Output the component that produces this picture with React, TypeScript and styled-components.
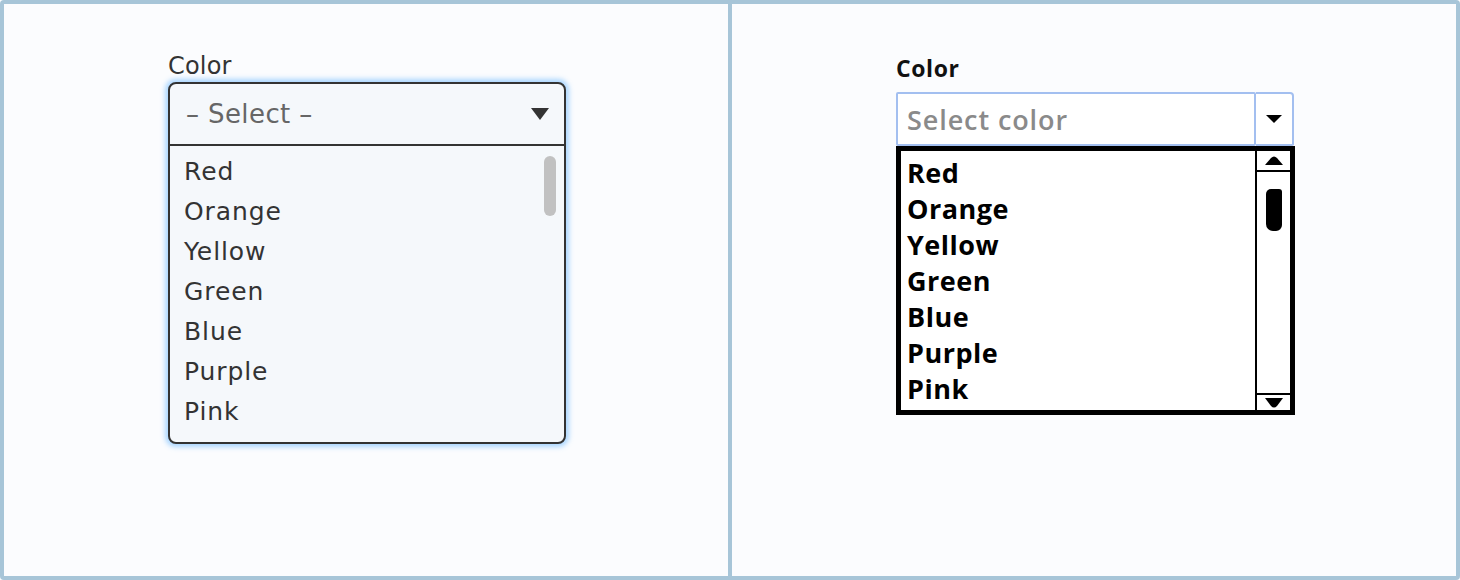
import React from "react";
import styled, { createGlobalStyle } from "styled-components";

const GlobalStyle = createGlobalStyle`
    html, body {
        margin: 0;
        padding: 0;
        background: #fbfcfe;
    }
    * {
        box-sizing: border-box;
    }
`;

const colors = ["Red", "Orange", "Yellow", "Green", "Blue", "Purple", "Pink"];

const Frame = styled.div`
    width: 1460px;
    height: 580px;
    padding: 4px;
    display: grid;
    grid-template-columns: 1fr 1fr;
    gap: 4px;
    background: #a7c5d8;
    border-radius: 4px;
`;

const Panel = styled.div<{ $top: number }>`
    background: #fbfcfe;
    padding: ${(p) => p.$top}px 0 0 164px;
    display: flex;
    flex-direction: column;
    align-items: flex-start;
`;

/* ---------- left: native-ish listbox ---------- */

const NativeLabel = styled.div`
    font-family: "DejaVu Sans", sans-serif;
    font-size: 24px;
    line-height: 28px;
    letter-spacing: 0.2px;
    color: #333;
    margin-bottom: 2px;
`;

const NativeBox = styled.div`
    width: 398px;
    border: 2px solid #333;
    border-radius: 8px;
    background: #f5f8fb;
    box-shadow: 0 0 5px 3px rgba(150, 205, 255, 0.8);
    font-family: "DejaVu Sans", sans-serif;
    overflow: hidden;
`;

const NativeHeader = styled.div`
    height: 62px;
    border-bottom: 2px solid #333;
    display: flex;
    align-items: center;
    justify-content: space-between;
    padding: 0 15px 0 16px;
    font-size: 26px;
    letter-spacing: 0.4px;
    color: #666;
`;

const NativeList = styled.div`
    position: relative;
    padding: 6px 0 10px;
`;

const NativeItem = styled.div`
    height: 40px;
    line-height: 40px;
    padding-left: 14px;
    font-size: 25px;
    letter-spacing: 0.9px;
    color: #333;
`;

const NativeThumb = styled.div`
    position: absolute;
    top: 10px;
    right: 8px;
    width: 12px;
    height: 60px;
    border-radius: 6px;
    background: #c1c1c1;
`;

/* ---------- right: sketch listbox ---------- */

const SketchLabel = styled.div`
    font-family: "Open Sans", sans-serif;
    font-weight: 700;
    font-size: 23px;
    line-height: 28px;
    letter-spacing: 0.6px;
    color: #111;
    margin-bottom: 10px;
`;

const SketchSelect = styled.div`
    width: 398px;
    height: 54px;
    display: flex;
`;

const SketchInput = styled.div`
    flex: 1;
    border: 2px solid #a3bff0;
    border-radius: 2px;
    background: #fff;
    display: flex;
    align-items: center;
    padding-left: 9px;
    font-family: "Open Sans", sans-serif;
    font-weight: 600;
    font-size: 27px;
    letter-spacing: 0.9px;
    color: #8a8a8a;
`;

const SketchButton = styled.div`
    width: 38px;
    border: 2px solid #a3bff0;
    border-left: none;
    border-radius: 0 4px 2px 0;
    background: #fff;
    display: flex;
    align-items: center;
    justify-content: center;
`;

const SketchList = styled.div`
    width: 399px;
    border: 5px solid #000;
    background: #fff;
    display: flex;
`;

const SketchItems = styled.div`
    flex: 1;
    padding: 4px 0 3px 6px;
    font-family: "Open Sans", sans-serif;
    font-weight: 700;
    font-size: 27px;
    letter-spacing: 0.5px;
    color: #000;
`;

const SketchItem = styled.div`
    height: 36px;
    line-height: 36px;
`;

const ScrollBar = styled.div`
    width: 35px;
    border-left: 2px solid #000;
    display: flex;
    flex-direction: column;
`;

const ScrollCap = styled.div<{ $down?: boolean }>`
    height: ${(p) => (p.$down ? 17 : 21)}px;
    display: flex;
    align-items: center;
    justify-content: center;
    ${(p) => (p.$down ? "border-top: 2px solid #000;" : "border-bottom: 2px solid #000;")}
`;

const ScrollTrack = styled.div`
    flex: 1;
    display: flex;
    justify-content: center;
    padding-top: 17px;
`;

const SketchThumb = styled.div`
    width: 16px;
    height: 42px;
    background: #000;
    border-radius: 5px 3px 6px 7px;
`;

export default function App() {
    return (
        <>
            <GlobalStyle />
            <Frame>
                <Panel $top={48}>
                    <NativeLabel>Color</NativeLabel>
                    <NativeBox>
                        <NativeHeader>
                            <span>– Select –</span>
                            <svg width="18" height="12" viewBox="0 0 18 12">
                                <path d="M0 0 H18 L9 12 Z" fill="#333" />
                            </svg>
                        </NativeHeader>
                        <NativeList>
                            {colors.map((c) => (
                                <NativeItem key={c}>{c}</NativeItem>
                            ))}
                            <NativeThumb />
                        </NativeList>
                    </NativeBox>
                </Panel>
                <Panel $top={50}>
                    <SketchLabel>Color</SketchLabel>
                    <SketchSelect>
                        <SketchInput>Select color</SketchInput>
                        <SketchButton>
                            <svg width="16" height="8" viewBox="0 0 16 8">
                                <path d="M0 0 H16 L8 8 Z" fill="#000" />
                            </svg>
                        </SketchButton>
                    </SketchSelect>
                    <SketchList>
                        <SketchItems>
                            {colors.map((c) => (
                                <SketchItem key={c}>{c}</SketchItem>
                            ))}
                        </SketchItems>
                        <ScrollBar>
                            <ScrollCap>
                                <svg width="18" height="9" viewBox="0 0 18 9">
                                    <path d="M0 9 H18 L12 2 Q9 -1 6 2 Z" fill="#000" />
                                </svg>
                            </ScrollCap>
                            <ScrollTrack>
                                <SketchThumb />
                            </ScrollTrack>
                            <ScrollCap $down>
                                <svg width="18" height="10" viewBox="0 0 18 10">
                                    <path d="M0 0 H18 L12 8 Q9 11 6 8 Z" fill="#000" />
                                </svg>
                            </ScrollCap>
                        </ScrollBar>
                    </SketchList>
                </Panel>
            </Frame>
        </>
    );
}
